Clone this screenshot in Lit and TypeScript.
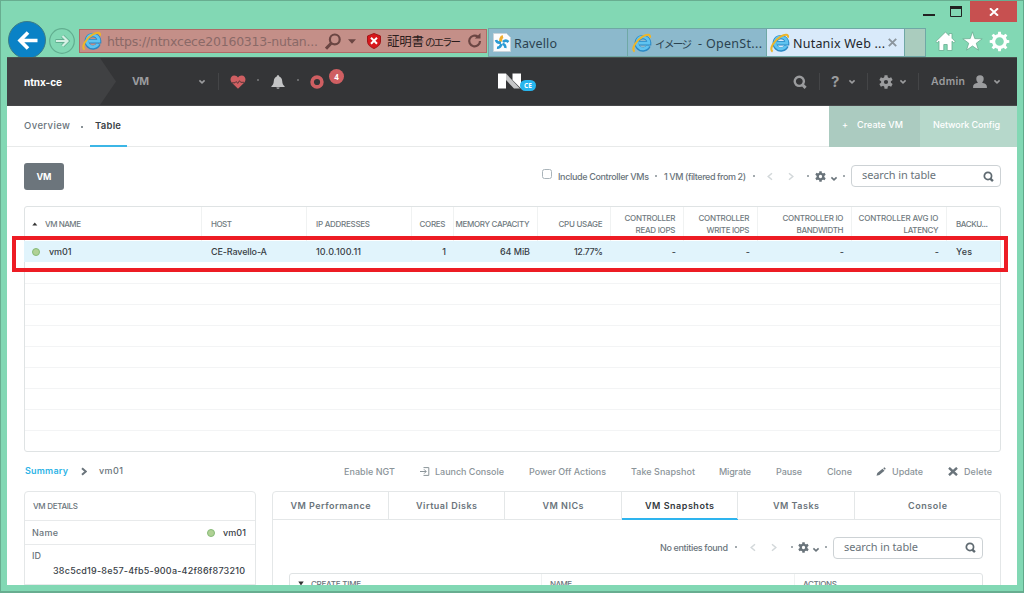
import { LitElement, html, css, svg, nothing } from "lit";
import { customElement, property } from "lit/decorators.js";

/** A single-line label whose tracking is computed so that it spans a given width. */
@customElement("fit-text")
class FitText extends LitElement {
  @property({ type: Number }) w = 0;
  @property() text = "";
  static styles = css`
    :host { display: inline-block; white-space: nowrap; flex: none; }
    span { display: inline-block; white-space: pre; }
  `;
  updated() {
    const s = this.renderRoot.querySelector("span") as HTMLElement;
    s.style.letterSpacing = "0px";
    const natural = s.getBoundingClientRect().width;
    const n = Math.max(1, this.text.length - 1);
    const tracking = (this.w - natural) / n;
    s.style.letterSpacing = tracking.toFixed(3) + "px";
    s.style.marginRight = (-tracking).toFixed(3) + "px";
  }
  render() {
    return html`<span>${this.text}</span>`;
  }
}

const t = (text: string, w: number, cls = "") =>
  html`<fit-text class=${cls} .text=${text} .w=${w}></fit-text>`;

const icon = (w: number, h: number, vb: string, body: unknown) =>
  html`<svg width=${w} height=${h} viewBox=${vb} fill="none">${body}</svg>`;

const chevron = (color: string) =>
  icon(8, 6, "0 0 8 6", svg`<path d="M1.4 1.3 4 3.8 6.6 1.3" stroke=${color} stroke-width="1.6"/>`);
const side = (d: string, color: string, sw = 1.5) =>
  icon(6, 9, "0 0 6 9", svg`<path d=${d} stroke=${color} stroke-width=${sw}/>`);
const LEFT = "M5 1.200 1.200 4.500 5 7.800";
const RIGHT = "M1 1.200 4.800 4.500 1 7.800";

const magnifier = (s: number, color: string, sw = 2.4) =>
  icon(s, s, "0 0 14 14", svg`<circle cx="6.3" cy="6.3" r="4.6" stroke=${color} stroke-width=${sw}/><path d="m9 9.3 3.6 3.6" stroke=${color} stroke-width="3"/>`);

const gear = (s: number, color: string) =>
  icon(s, s, "0 0 14 14", svg`
    <g fill=${color}>
      <path fill-rule="evenodd" d="M7 2.1a4.9 4.9 0 1 0 0 9.8 4.9 4.9 0 0 0 0-9.8Zm0 2.8a2.1 2.1 0 1 1 0 4.200 2.1 2.1 0 0 1 0-4.200Z"/>
      ${[0, 60, 120, 180, 240, 300].map((a) => svg`<path transform="rotate(${a} 7 7)" d="M5.200 3.200 5.500.2h3L8.800 3.200Z"/>`)}
    </g>`);

const ie = () =>
  icon(20, 20, "0 0 20 20", svg`
    <path d="M16.600 12.900a6.200 6.200 0 1 1 .5-3.200v.6H6.600" stroke="#2a88c4" stroke-width="4.400"/>
    <path d="M16.100 12.900a6 6 0 1 1 .8-2.700H6.600" stroke="#5fc3f0" stroke-width="2.800"/>
    <path d="M2.600 18.600C-1 16 4 7.500 10.500 3.600 14.600 1.200 19 .8 17.900 4.600" stroke="#edb52a" stroke-width="2"/>`);

const COLS = [
  { k: "name", a: "VM NAME", w: 36, v: "vm01", vw: 22.5 },
  { k: "left", a: "HOST", w: 21, v: "CE-Ravello-A", vw: 56 },
  { k: "left", a: "IP ADDRESSES", w: 54, v: "10.0.100.11", vw: 45 },
  { k: "num", a: "CORES", w: 26, v: "1", vw: 3 },
  { k: "num", a: "MEMORY CAPACITY", w: 74, v: "64 MiB", vw: 30 },
  { k: "num", a: "CPU USAGE", w: 44, v: "12.77%", vw: 29 },
  { k: "num", a: "CONTROLLER", w: 51, b: "READ IOPS", bw: 40, v: "-", vw: 3 },
  { k: "num", a: "CONTROLLER", w: 51, b: "WRITE IOPS", bw: 43, v: "-", vw: 3 },
  { k: "num", a: "CONTROLLER IO", w: 61, b: "BANDWIDTH", bw: 47, v: "-", vw: 3 },
  { k: "num", a: "CONTROLLER AVG IO", w: 80, b: "LATENCY", bw: 35, v: "-", vw: 3 },
  { k: "left", a: "BACKU...", w: 32, v: "Yes", vw: 16 },
];

@customElement("app-root")
class AppRoot extends LitElement {
  static styles = css`
    * { box-sizing: border-box; }
    :host {
      display: block; position: relative; width: 1024px; height: 593px; overflow: hidden;
      background: #82d8b4; font: 500 9px/12px Inter, "Noto Sans", sans-serif; color: #6a747b;
    }
    svg { display: block; flex: none; }
    .window { display: flex; flex-direction: column; height: 593px; border: 1px solid #68ad90; border-bottom-width: 2px; border-right-color: #5fa98a; }
    .title { height: 21px; display: flex; justify-content: flex-end; flex: none; }
    .wbtns { display: flex; gap: 15px; padding: 5px 8px 0 0; }
    .close { width: 47px; height: 21px; background: #c75050; display: grid; place-items: center; margin-right: 6px; }
    .nav { height: 35px; flex: none; display: flex; padding-left: 7px; overflow: visible; position: relative; }
    .back { margin-top: -1px; width: 38px; height: 36px; overflow: hidden; }
    .fwd { margin: 6px 4px 0 3px; width: 26px; }
    .addr { margin-top: 7px; width: 408px; height: 24px; background: #c48f88; border: 1px solid #b06a66; display: grid;
      grid-template-columns: 25px 218px 23px 19px 20px 80px 1fr; align-items: center; padding-left: 2px; }
    .url { font: 12.5px/20px "DejaVu Sans", sans-serif; color: #8a6967; padding-top: 1px; }
    .jp { display: flex; align-items: center; gap: 1px; font: 12.5px/20px "Noto Sans CJK JP", sans-serif; color: #2b1c1c; }
    .kana { font-size: 10.5px; padding-top: 1px; }
    .tabs { display: grid; grid-template-columns: 139px 139px 138px 22px; margin: 6px 0 0 1px; height: 29px; }
    .tab { display: flex; align-items: center; gap: 3px; background: #8cb9cc; border: 1px solid #6fa8a5; border-width: 1px 0 1px 1px; padding-left: 4px;
      font: 12.5px/20px "Noto Sans", "Noto Sans CJK JP", sans-serif; color: #2b4350; }
    .tab fit-text { padding-top: 2px; }
    .tab .kana { margin-right: 3px; padding-top: 2px; }
    .tab.on { background: #d9eafa; color: #22262a; padding-left: 3px; }
    .tab.new { background: #aaccbe; border-right-width: 1px; }
    .tools { display: flex; gap: 6px; padding: 9px 0 0 9px; }

    .page { margin: 0 0 0 6px; width: 1010px; height: 528px; flex: none; background: #fff; overflow: hidden; }
    .head { height: 49px; background: #343537; display: grid; align-items: center; color: #9b9c9e;
      border-top: 1px solid #4a5350; border-bottom: 1px solid #47484a;
      grid-template-columns: 125px 66px 20px 12px 27px 14px 26px 13px 18px 170px 295px 26px 12px 17px 19px 12px 20px 19px 13px 42px 20px 1fr;
      font-weight: 600; font-size: 10.5px; }
    .cluster { width: 109px; height: 47px; background: #404143; clip-path: polygon(0 0, 93px 0, 109px 50%, 93px 100%, 0 100%); padding: 18px 0 0 17px; color: #fff; font-weight: 700; font-size: 10px; }
    .bold { font-weight: 700; font-size: 10.5px; }
    .sep { width: 1px; height: 17px; background: #444547; }
    .dot { width: 1.5px; height: 1.5px; background: #68696b; margin-bottom: 3px; }
    .badge { width: 15px; height: 15px; border-radius: 50%; background: #cf5f62; color: #fff; font: 700 8px/15px "Noto Sans", sans-serif; text-align: center; margin: 0 0 10px 1px; }
    .q { font: 700 15px/20px Inter, sans-serif; }
    .logo { position: relative; width: 24px; height: 18px; }
    .ce { position: absolute; left: 22px; top: 7px; width: 16px; height: 11px; border-radius: 6px; background: #27b6ee; color: #fff; font: 700 6.5px/11px "Noto Sans", sans-serif; text-align: center; }

    .sub { height: 41px; border-bottom: 1px solid #e8eaea; display: flex; font-size: 9.5px; }
    .sub .ov { padding: 14px 0 0 17px; width: 73px; }
    .sub .mid { width: 10px; margin-top: 20px; }
    .sub .mid i { display: block; width: 2px; height: 2px; background: #8a9297; margin-left: 1px; }
    .sub .tb { width: 37px; height: 41px; border-bottom: 2px solid #3cb6e6; padding: 14px 0 0 5px; color: #3b4247; font-weight: 600; }
    .cta { display: flex; margin-left: auto; color: #fff; height: 40px; }
    .create { width: 91px; height: 41px; background: #abcbc0; display: flex; gap: 9px; padding: 13px 0 0 13px; font-size: 9px; }
    .netcfg { width: 97px; height: 41px; background: #b6d8cb; padding: 13px 0 0 13px; font-size: 9px; }

    .bar { height: 59px; display: grid; align-items: center; padding-left: 17px;
      grid-template-columns: 518px 16px 97px 9px 89px 14px 21px 19px 8px 15px 13px 8px 1fr; }
    .vmbtn { width: 40px; height: 27px; border-radius: 3px; background: #6c757c; color: #fff; font-weight: 700; display: grid; place-items: center; }
    .chk { width: 10px; height: 10px; border: 1px solid #aab4ba; border-radius: 2.5px; margin-bottom: 5px; }
    .pt { width: 1.5px; height: 1.5px; background: #a3aaae; margin-bottom: 1px; }
    .dn { margin-top: 4px; }
    .search { width: 150px; height: 22px; border: 1px solid #cdd2d5; border-radius: 4px; display: flex; align-items: center; justify-content: space-between; padding: 0 6px 0 10px; font: 11px/14px "Noto Sans", sans-serif; color: #6a747b; }
    .search fit-text { padding-bottom: 2px; }
    .bar .search { margin-bottom: 1px; }
    .table { margin-left: 17px; width: 977px; height: 246px; border: 1px solid #dfe3e4; border-radius: 3px; background: repeating-linear-gradient(#fff 0 20px, #f3f4f5 20px 21px) 0 56px no-repeat; }
    .row { display: grid; grid-template-columns: 178px 105px 105px 42px 84px 73px 73px 74px 94px 95px 1fr; margin-left: -1px; }
    .thead { height: 34px; font-size: 8px; color: #707a80; font-weight: 500; }
    .thead .cell { border-right: 1px solid #f0f2f2; line-height: 12px; padding-bottom: 1px; }
    .cell { display: flex; flex-direction: column; justify-content: center; min-width: 0; }
    .row .cell:last-child { border: 0; }
    .left { align-items: flex-start; padding-left: 9px; }
    .num { align-items: flex-end; padding-right: 8px; }
    .thead .num { padding-right: 7.500px; }
    .name { flex-direction: row; justify-content: flex-start; align-items: center; padding-left: 8px; gap: 7px; }
    .trow { height: 21px; background: #e1f4fc; color: #394147; }
    .trow .cell { padding-bottom: 0; }
    .trow .name { gap: 9px; }
    .led { width: 8px; height: 8px; border-radius: 50%; background: #b0d195; border: 1px solid #86bb78; flex: none; }
    .mark { position: absolute; left: 12px; top: 236px; width: 996px; height: 36px; border: 4px solid #ed1c24; }

    .acts { height: 39px; display: grid; align-items: center; padding-left: 18px; color: #8b9499;
      grid-template-columns: 56px 18px 245px 76px 15px 94px 102px 88px 57px 51px 49px 16px 56px 16px 1fr; }
    .sum { color: #2eb4e6; font-weight: 600; padding-bottom: 1px; }
    .crumb { color: #6a747b; padding-bottom: 1px; }
    .panels { display: flex; gap: 16px; padding-left: 17px; }
    .details { width: 232px; height: 110px; border: 1px solid #e4e7e8; border-radius: 4px; }
    .details > div { border-bottom: 1px solid #e8eaeb; }
    .dh { height: 29px; padding: 8px 0 0 8px; font-size: 8px; }
    .dn2 { height: 24px; display: flex; align-items: center; padding: 0 9px 0 7px; gap: 8px; }
    .dn2 .led { margin-left: auto; }
    .did { height: 40px; padding: 4px 10px 0 7px; display: flex; flex-direction: column; line-height: 13px; }
    .dark { color: #394147; }
    .did .dark { align-self: flex-end; margin-top: 2px; }
    .right { width: 729px; height: 110px; border: 1px solid #e4e7e8; border-radius: 4px; }
    .ptabs { display: grid; grid-template-columns: 116px 116px 117px 116px 117px 1fr; height: 28px; border-bottom: 1px solid #e4e7e8; font-weight: 600; }
    .ptab { border-right: 1px solid #e4e7e8; display: grid; place-items: center; }
    .ptab:last-child { border: 0; }
    .ptab.on { color: #33393d; box-shadow: inset 0 -1px #2eb4ee, 0 1px #2eb4ee; }
    .pbar { height: 53px; display: grid; align-items: center; padding: 2px 0 0 387px; grid-template-columns: 75px 15px 21px 20px 7px 14px 13px 8px 1fr; }
    .ptable { margin-left: 16px; width: 694px; height: 30px; border: 1px solid #dfe3e4; border-radius: 3px; display: grid; grid-template-columns: 252px 253px 1fr; font-size: 8px; }
    .ptable div { border-right: 1px solid #f0f2f2; padding: 4px 0 0 8px; display: flex; gap: 7px; align-items: flex-start; }
    .ptable div:last-child { border: 0; }
    .ptable svg { margin-top: 3px; }
  `;

  chrome() {
    return html`
      <div class="title">
        <div class="wbtns">
          ${icon(12, 12, "0 0 12 12", svg`<path d="M0 9h12" stroke="#222" stroke-width="2"/>`)}
          ${icon(12, 11, "0 0 12 11", svg`<path d="M.5 1.5h11v9H.5z" stroke="#222"/><path d="M0 1.5h12" stroke="#222" stroke-width="3"/>`)}
        </div>
        <div class="close">${icon(10, 8, "0 0 10 8", svg`<path d="m1 .3 8 7.4M9 .3 1 7.7" stroke="#fff" stroke-width="2"/>`)}</div>
      </div>
      <div class="nav">
        <div class="back">${icon(38, 38, "0 0 38 38", svg`<circle cx="19" cy="19" r="18.5" fill="#0a82c6" stroke="#3c7c86"/><path d="M29.500 19.500H11.500M20 11.500l-8 8 8 8" stroke="#fff" stroke-width="3.600"/>`)}</div>
        <div class="fwd">${icon(26, 26, "0 0 26 26", svg`<circle cx="13" cy="13" r="12.3" stroke="#62ae90" stroke-width="1.2"/><path d="M6.500 13h12M13.500 8l5 5-5 5" stroke="#62ae90" stroke-width="3.800"/><path d="M7 13h11M13.500 8l5 5-5 5" stroke="#d5f0e4" stroke-width="2.200"/>`)}</div>
        <div class="addr">
          ${ie()} ${t("https://ntnxcece20160313-nutan...", 211, "url")}
          ${icon(16, 17, "0 0 16 17", svg`<circle cx="9.800" cy="6.400" r="4.900" stroke="#6b4643" stroke-width="2.200"/><path d="M6.200 10.200 1 15.600" stroke="#6b4643" stroke-width="3"/>`)}
          ${icon(8, 5, "0 0 8 5", svg`<path d="M0 .3h8L4 4.700Z" fill="#6b4643"/>`)}
          ${icon(14, 16, "0 0 14 16", svg`<path d="M7 .5 13.500 3v5c0 4-3 6-6.500 7.500C3.500 14 .5 12 .5 8V3Z" fill="#d8171c" stroke="#a31518"/><path d="m4 4.800 6 6M10 4.800l-6 6" stroke="#fff" stroke-width="2"/>`)}
          <div class="jp">${t("証明書", 37)}${t("のエラー", 36, "kana")}</div>
          ${icon(15, 16, "0 0 15 16", svg`<path d="M11 3.800A5.400 5.400 0 1 0 13 8" stroke="#6b4643" stroke-width="2.200"/><path d="M7.800 5.600h5.700V0" fill="#6b4643"/>`)}
        </div>
        <div class="tabs">
          <div class="tab">${icon(18, 19, "0 0 18 19", svg`<path d="M.5.5h13l4 4v14H.5z" fill="#fbfcfd" stroke="#c9d4da"/><path d="M8 9c-1-2 0-5 2-5.500" stroke="#efae2d" stroke-width="3"/><path d="M10 9c2-2 4-1.500 5.500 0M9.500 11c2 0 3 2 2.800 4M8.500 11c-1 2.500-2.500 4-4.500 3.800M8 9.500C5.500 10 3.500 9 3 7" stroke="#2b9bd4" stroke-width="2.600"/>`)} ${t("Ravello", 43)}</div>
          <div class="tab">${ie()} ${t("イメージ", 37, "kana")}${t("- OpenSt...", 64)}</div>
          <div class="tab on">${ie()} ${t("Nutanix Web ...", 92)}
            ${icon(9, 9, "0 0 9 9", svg`<path d="m.8.8 7.400 7.400M8.200.8.8 8.200" stroke="#8b959d" stroke-width="1.900"/>`)}</div>
          <div class="tab new"></div>
        </div>
        <div class="tools">
          ${icon(21, 21, "0 0 21 21", svg`<path d="M10.500 1 .8 10.500l1.400 1.300L4 10.200V19.500h4.800v-6h3.400v6H17v-9.300l1.800 1.600 1.400-1.300L17 7.200V2.500h-3v2Z" fill="#fff" stroke="#68ad90" stroke-width=".8"/>`)}
          ${icon(21, 21, "0 0 21 21", svg`<path d="m10.500.8 2.300 6.800 7.400.2-5.900 4.400 2.200 7-6-4.200-6 4.200 2.200-7L.8 7.800l7.400-.2Z" fill="#fff" stroke="#68ad90" stroke-width=".8"/>`)}
          ${icon(21, 21, "0 0 21 21", svg`<circle cx="10.500" cy="10.500" r="5.900" stroke="#fff" stroke-width="3.200"/>${[0, 45, 90, 135, 180, 225, 270, 315].map((a) => svg`<path transform="rotate(${a} 10.500 10.500)" d="M8.700 4 9.200.7h2.600l.5 3.300Z" fill="#fff"/>`)}`)}
        </div>
      </div>`;
  }

  header() {
    const g = "#9b9c9e";
    return html`<div class="head">
      <div class="cluster">${t("ntnx-ce", 38)}</div>
      ${t("VM", 17, "bold")} ${chevron(g)} <i class="sep"></i>
      ${icon(16, 14, "0 0 16 14", svg`<path d="M8 13.800 1.600 7.600C-.6 5 .7.5 4.300.5 6 .5 7.300 1.300 8 2.500 8.700 1.300 10 .5 11.700.5c3.600 0 4.900 4.500 2.700 7.100Z" fill="#cf5f62"/><path d="M2 7.800h3l1.200-1.300 1.500 1.900 1.800-2.700 1.200 1.600H14" stroke="#4c3335" stroke-width=".9"/>`)}
      <i class="dot"></i>
      ${icon(14, 14, "0 0 14 14", svg`<path d="M7 .3c.8 0 1.200.5 1.200 1.200 2 .6 2.800 2.300 3 4.500.2 2.800.8 3.900 2.400 5.200v.8H.4v-.8C2 9.900 2.600 8.800 2.800 6c.2-2.200 1-3.900 3-4.500C5.800.8 6.200.3 7 .3ZM5.400 12.500h3.200a1.600 1.300 0 0 1-3.200 0Z" fill="#c3c4c5"/>`)}
      <i class="dot"></i>
      ${icon(14, 14, "0 0 14 14", svg`<circle cx="7" cy="7" r="4.900" stroke="#cf5f62" stroke-width="3.600"/>`)}
      <div class="badge">4</div>
      <div class="logo">
        ${icon(24, 16, "0 0 24 16", svg`<path d="M0 .5h8v15H0z" fill="#fff"/><path d="M8 .5 22 15.500h-6L8 7Z" fill="#c6c7c8"/><path d="M14.500.500H23V15.500L14.500 7Z" fill="#fff"/>`)}
        <div class="ce">CE</div>
      </div>
      ${magnifier(14, g)} <i class="sep"></i>
      <span class="q">?</span> ${chevron(g)} <i class="sep"></i>
      ${gear(14, g)} ${chevron(g)} <i class="sep"></i>
      ${t("Admin", 34)}
      ${icon(14, 13, "0 0 14 13", svg`<path d="M7 .2c2.600 0 3.700 1.500 3.700 3.500 0 1.700-.7 3-1.600 3.800.3.800 4.800.8 4.800 4.200V13H.1v-1.300c0-3.400 4.500-3.400 4.800-4.200-.9-.8-1.600-2.100-1.600-3.800C3.300 1.700 4.400.2 7 .2Z" fill=${g}/>`)}
      ${chevron(g)}
    </div>`;
  }

  search() {
    return html`<div class="search">${t("search in table", 74)} ${magnifier(11, "#5f6a71", 2.2)}</div>`;
  }

  vmTable() {
    return html`<div class="table">
      <div class="row thead">${COLS.map((c, i) => html`<div class="cell ${c.k}">
        ${i === 0 ? icon(6, 4, "0 0 6 4", svg`<path d="M.3 3.500h5L2.800.5Z" fill="#333"/>`) : nothing}
        ${t(c.a, c.w)}${c.b ? t(c.b, c.bw) : nothing}</div>`)}</div>
      <div class="row trow">${COLS.map((c, i) => html`<div class="cell ${c.k}">
        ${i === 0 ? html`<i class="led"></i>` : nothing}${t(c.v, c.vw)}</div>`)}</div>
    </div>`;
  }

  render() {
    const s = "#6a747b";
    const l = "#d3d8da";
    const tabs: [string, number][] = [["VM Performance", 80], ["Virtual Disks", 61], ["VM NICs", 41], ["VM Snapshots", 69], ["VM Tasks", 46], ["Console", 39]];
    return html`<div class="window">
      ${this.chrome()}
      <div class="page">
        ${this.header()}
        <div class="sub">
          <div class="ov">${t("Overview", 46)}</div>
          <div class="mid"><i></i></div>
          <div class="tb">${t("Table", 26)}</div>
          <div class="cta">
            <div class="create">${t("+", 6)} ${t("Create VM", 46)}</div>
            <div class="netcfg">${t("Network Config", 67)}</div>
          </div>
        </div>
        <div class="bar">
          <div class="vmbtn">${t("VM", 15)}</div>
          <i class="chk"></i> ${t("Include Controller VMs", 91)} <i class="pt"></i>
          ${t("1 VM (filtered from 2)", 82)} <i class="pt"></i>
          ${side(LEFT, l)} ${side(RIGHT, l)} <i class="pt"></i>
          ${gear(11, s)} <span class="dn">${chevron(s)}</span> <i class="pt"></i>
          ${this.search()}
        </div>
        ${this.vmTable()}
        <div class="acts">
          ${t("Summary", 43, "sum")} ${side(RIGHT, s, 2)} ${t("vm01", 24, "crumb")}
          ${t("Enable NGT", 51)}
          ${icon(10, 9, "0 0 10 9", svg`<path d="M3.500.6h5.300v7.800H3.500M0 4.500h6M4 2.300l2.200 2.200L4 6.700" stroke="#8b9499"/>`)}
          ${t("Launch Console", 69)} ${t("Power Off Actions", 77)} ${t("Take Snapshot", 64)}
          ${t("Migrate", 32)} ${t("Pause", 26)} ${t("Clone", 25)}
          ${icon(10, 9, "0 0 10 9", svg`<path d="M.5 8.700 1.300 6 6.500 1.700l2 2L3.400 8ZM7.200 1.200 8.400.2l1.400 1.500-1 1.100Z" fill="#6a747b"/>`)}
          ${t("Update", 31)}
          ${icon(10, 9, "0 0 10 9", svg`<path d="m1 .8 8 7.400M9 .8 1 8.200" stroke="#6a747b" stroke-width="2.400"/>`)}
          ${t("Delete", 28)}
        </div>
        <div class="panels">
          <div class="details">
            <div class="dh">${t("VM DETAILS", 45)}</div>
            <div class="dn2">${t("Name", 26)} <i class="led"></i> ${t("vm01", 23, "dark")}</div>
            <div class="did">${t("ID", 9)} ${t("38c5cd19-8e57-4fb5-900a-42f86f873210", 192, "dark")}</div>
          </div>
          <div class="right">
            <div class="ptabs">${tabs.map(([n, w], i) => html`<div class="ptab ${i === 3 ? "on" : ""}">${t(n, w)}</div>`)}</div>
            <div class="pbar">
              ${t("No entities found", 68)} <i class="pt"></i>
              ${side(LEFT, l)} ${side(RIGHT, l)} <i class="pt"></i>
              ${gear(11, s)} <span class="dn">${chevron(s)}</span> <i class="pt"></i>
              ${this.search()}
            </div>
            <div class="ptable">
              <div>${icon(6, 5, "0 0 6 5", svg`<path d="M.3.5h5.400L3 4.500Z" fill="#333"/>`)} ${t("CREATE TIME", 50)}</div>
              <div>${t("NAME", 22)}</div>
              <div>${t("ACTIONS", 34)}</div>
            </div>
          </div>
        </div>
      </div>
      <div class="mark"></div>
    </div>`;
  }
}
